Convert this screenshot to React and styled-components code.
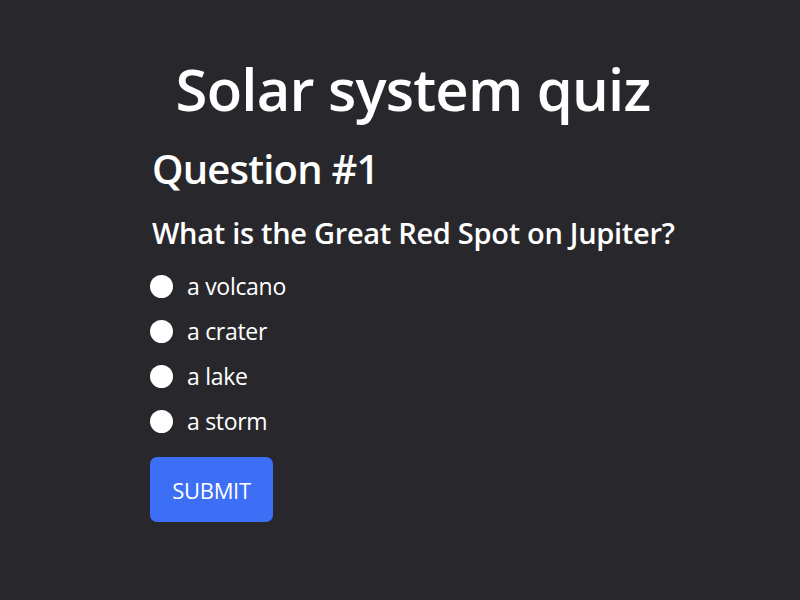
import React, { useState } from 'react';
import styled, { createGlobalStyle } from 'styled-components';

const GlobalStyle = createGlobalStyle`
  html, body {
    margin: 0;
    padding: 0;
    background: #28282c;
  }
  body {
    font-family: "Open Sans", "Liberation Sans", sans-serif;
    color: #ffffff;
  }
`;

const Page = styled.div`
  width: 800px;
  height: 600px;
  background: #28282c;
  overflow: hidden;
`;

const Title = styled.h1`
  margin: 0;
  padding: 49px 0 0 26px;
  text-align: center;
  font-size: 58px;
  font-weight: 600;
  line-height: 80px;
  letter-spacing: -0.8px;
`;

const Quiz = styled.form`
  width: 500px;
  margin: 0 auto;
  display: flex;
  flex-direction: column;
`;

const QuestionNumber = styled.h2`
  margin: 12px 0 0 2px;
  font-size: 40px;
  font-weight: 600;
  line-height: 56px;
  letter-spacing: -0.8px;
`;

const QuestionText = styled.h3`
  margin: 18px 0 17px 2px;
  font-size: 29px;
  font-weight: 600;
  line-height: 36px;
  letter-spacing: -0.3px;
  white-space: nowrap;
`;

const Options = styled.div`
  display: flex;
  flex-direction: column;
  gap: 9px;
`;

const Option = styled.label`
  display: flex;
  align-items: center;
  gap: 14px;
  height: 36px;
  font-size: 23px;
  letter-spacing: -0.3px;
  cursor: pointer;
`;

const Radio = styled.input.attrs({ type: 'radio' })`
  appearance: none;
  margin: 0;
  width: 23px;
  height: 23px;
  border-radius: 50%;
  background: #ffffff;
  flex: none;
  &:checked {
    box-shadow: inset 0 0 0 6px #3d6ef6;
  }
`;

const SubmitButton = styled.button`
  align-self: flex-start;
  margin-top: 18px;
  width: 123px;
  height: 65px;
  border: none;
  border-radius: 7px;
  background: #3d6ef6;
  color: #ffffff;
  font-family: inherit;
  font-size: 22px;
  letter-spacing: -0.3px;
  cursor: pointer;
`;

const answers = ['a volcano', 'a crater', 'a lake', 'a storm'];

export default function App() {
  const [choice, setChoice] = useState(null);

  return (
    <Page>
      <GlobalStyle />
      <Title>Solar system quiz</Title>
      <Quiz onSubmit={e => e.preventDefault()}>
        <QuestionNumber>Question #1</QuestionNumber>
        <QuestionText>What is the Great Red Spot on Jupiter?</QuestionText>
        <Options>
          {answers.map(a => (
            <Option key={a}>
              <Radio
                name="answer"
                checked={choice === a}
                onChange={() => setChoice(a)}
              />
              {a}
            </Option>
          ))}
        </Options>
        <SubmitButton type="submit">SUBMIT</SubmitButton>
      </Quiz>
    </Page>
  );
}
